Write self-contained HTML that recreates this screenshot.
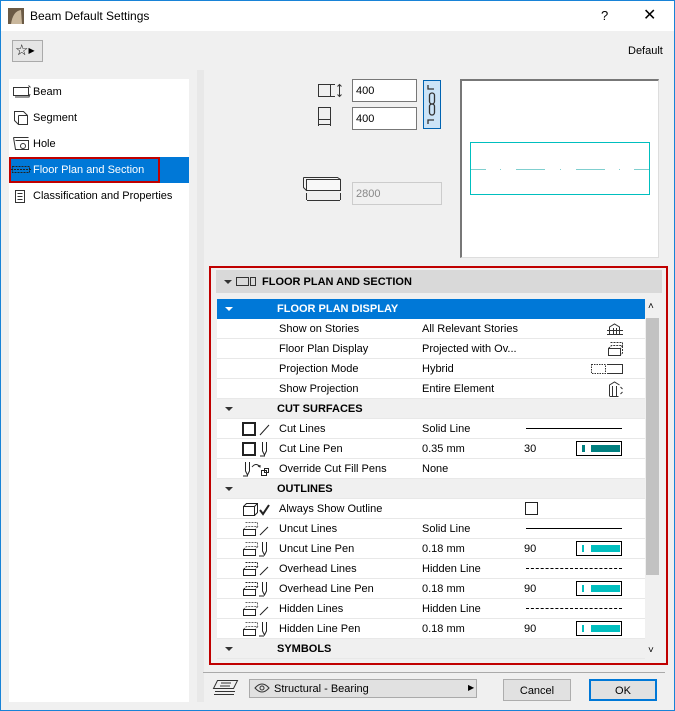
<!DOCTYPE html>
<html><head><meta charset="utf-8"><style>
*{box-sizing:border-box;margin:0;padding:0}
body{width:675px;height:711px;background:#f0f0f0;font-family:"Liberation Sans",sans-serif;font-size:11px;color:#000;position:relative;overflow:hidden}
.a{position:absolute}
.win{left:0;top:0;width:675px;height:711px;border:1px solid #1883d7;border-top:none}
.title{left:0;top:0;width:675px;height:31px;background:#fff;border-top:1px solid #1883d7}
.row{position:absolute;left:217px;width:428px;height:20px;background:#fff;border-bottom:1px solid #e8e8e8}
.row span{position:absolute;top:4px}
.row svg{position:absolute}
.sec{background:#f0f0f0;font-weight:bold}
.tri{position:absolute;left:8px;top:8px;width:0;height:0;border-left:4px solid transparent;border-right:4px solid transparent;border-top:4px solid #333}
.sw{position:absolute;left:359px;top:2px;width:46px;height:15px;border:1px solid #000;background:#fff}
.sw i{position:absolute;top:3px;height:7px;background:#00bfbf}
.line{position:absolute;left:309px;top:9px;width:96px;border-top:1px solid #000}
.dash{position:absolute;left:309px;top:9px;width:96px;border-top:1px dashed #000}
</style></head><body>
<div class="a title"></div>
<svg class="a" style="left:8px;top:8px" width="16" height="16"><rect width="16" height="16" fill="#6b5a45"/><path d="M3 16 Q5 3 13 2 L14 16Z" fill="#c9b79c"/></svg>
<div class="a" style="left:30px;top:9px;font-size:12px">Beam Default Settings</div>
<div class="a" style="left:601px;top:8px;font-size:13px">?</div>
<div class="a" style="left:643px;top:5px;font-size:16px">✕</div>
<div class="a win"></div>
<div class="a" style="left:12px;top:40px;width:31px;height:22px;border:1px solid #aaa;background:#e5e5e5;font-size:15px;padding-left:2px;line-height:20px">☆<span style="font-size:8px;vertical-align:middle">▶</span></div>
<div class="a" style="left:628px;top:45px">Default</div>
<div class="a" style="left:9px;top:79px;width:180px;height:623px;background:#fff"></div>
<div class="a" style="left:197px;top:70px;width:7px;height:632px;background:#e8e8e8"></div>
<svg class="a" style="left:12px;top:84px" width="20" height="14" fill="none" stroke="#333"><path d="M1.5 3.5h15v8h-15z M3 13h14l1-3 M16.5 1.5l2 2"/></svg><div class="a" style="left:33px;top:86px">Beam</div>
<svg class="a" style="left:13px;top:110px" width="16" height="16" fill="none" stroke="#333"><path d="M1.5 1.5h9l4 4v9h-9l-4-4z M5.5 5.5h9 M5.5 5.5v9"/></svg><div class="a" style="left:33px;top:112px">Segment</div>
<svg class="a" style="left:12px;top:136px" width="18" height="16" fill="none" stroke="#333"><path d="M1.5 1.5h15 M1.5 1.5l2 12h13v-9h-13"/><circle cx="11" cy="10" r="2.5"/></svg><div class="a" style="left:33px;top:138px">Hole</div>
<div class="a" style="left:9px;top:157px;width:180px;height:26px;background:#0078d7"></div>
<div class="a" style="left:9px;top:157px;width:151px;height:26px;border:2px solid #c00000"></div>
<svg class="a" style="left:11px;top:165px" width="20" height="10" fill="none" stroke="#222"><path d="M1.5 1.5h17v6h-17z M0 4.5h20" stroke-dasharray="2 1"/></svg>
<div class="a" style="left:33px;top:164px;color:#fff">Floor Plan and Section</div>
<svg class="a" style="left:14px;top:189px" width="12" height="15" fill="none" stroke="#333"><path d="M1.5 1.5h9v12h-9z M3.5 4.5h5 M3.5 7.5h5 M3.5 10.5h5"/></svg><div class="a" style="left:33px;top:190px">Classification and Properties</div>

<svg class="a" style="left:317px;top:83px" width="28" height="46" fill="none" stroke="#333"><path d="M1.5 1.5h12v12h-12z M14 1.5h4 M14 13.5h4 M22.5 1.5v12 M20.5 3.5l2-2 2 2 M20.5 11.5l2 2 2-2"/><path d="M1.5 24.5h12v12h-12z M1.5 37v6 M13.5 37v6 M2 41.5h11"/></svg>
<div class="a" style="left:352px;top:79px;width:65px;height:23px;border:1px solid #777;background:#fff;padding:5px 3px">400</div>
<div class="a" style="left:352px;top:107px;width:65px;height:23px;border:1px solid #777;background:#fff;padding:5px 3px">400</div>
<div class="a" style="left:423px;top:80px;width:18px;height:49px;border:1px solid #0063b1;background:#cce4f7"></div>
<svg class="a" style="left:426px;top:84px" width="12" height="41" fill="none" stroke="#333" stroke-width="1.3"><path d="M2 1v4h6 M2 40v-4h6"/><rect x="3.5" y="9" width="5" height="11" rx="2.5"/><rect x="3.5" y="20" width="5" height="11" rx="2.5"/></svg>
<svg class="a" style="left:302px;top:176px" width="42" height="28" fill="none" stroke="#333"><path d="M4.5 3.5h34v11h-34z M1.5 1.5h34l3 2 M1.5 1.5v10l3 3" fill="#f8f8f8"/><path d="M4.5 17v7 M38.5 17v7 M5 24.5h33"/></svg>
<div class="a" style="left:352px;top:182px;width:90px;height:23px;border:1px solid #ccc;background:#f0f0f0;padding:5px 3px;color:#888">2800</div>
<div class="a" style="left:460px;top:79px;width:199px;height:179px;background:#fff;border:1px solid #ddd;border-top:2px solid #777;border-left:2px solid #777"></div>
<div class="a" style="left:470px;top:142px;width:180px;height:53px;border:1px solid #00bfbf"></div>
<svg class="a" style="left:471px;top:168px" width="178" height="3"><path d="M0 1.5h15 M29 1.5h1 M45 1.5h29 M89 1.5h1 M105 1.5h29 M148 1.5h1 M163 1.5h15" stroke="#7fcfcf"/></svg>

<div class="a" style="left:209px;top:266px;width:459px;height:399px;border:2px solid #c00000"></div>
<div class="a" style="left:216px;top:270px;width:446px;height:23px;background:#d9d9d9;font-weight:bold;padding:6px 0 0 46px">FLOOR PLAN AND SECTION</div>
<div class="a" style="left:224px;top:280px;border-left:4px solid transparent;border-right:4px solid transparent;border-top:4px solid #333"></div>
<div class="a" style="left:236px;top:277px;width:13px;height:9px;border:1px solid #333"></div>
<div class="a" style="left:250px;top:277px;width:6px;height:9px;border:1px solid #333"></div>
<div class="a" style="left:645px;top:299px;width:15px;height:360px;background:#f0f0f0"></div>
<div class="a" style="left:646px;top:318px;width:13px;height:257px;background:#c2c2c2"></div>
<div class="a" style="left:648px;top:301px;font-size:10px">˄</div>
<div class="a" style="left:648px;top:645px;font-size:10px">˅</div>

<div class="row" style="top:299px;background:#0078d7;color:#fff;font-weight:bold;border:none"><i class="tri" style="border-top-color:#fff"></i><span style="left:60px">FLOOR PLAN DISPLAY</span></div>
<div class="row" style="top:319px"><span style="left:62px">Show on Stories</span><span style="left:205px">All Relevant Stories</span><svg style="left:390px;top:3px" width="16" height="15" fill="none" stroke="#333"><path d="M2.5 13V5l5-3 5 3v8 M0 8.5h16 M0 12.5h16 M6.5 6v7 M9.5 6v7"/></svg></div>
<div class="row" style="top:339px"><span style="left:62px">Floor Plan Display</span><span style="left:205px">Projected with Ov...</span><svg style="left:390px;top:2px" width="16" height="16" fill="none" stroke="#333"><path d="M3.5 1.5h12v5 M1.5 7.5h12v7h-12z M1.5 7.5l3-3h11l-2 3 M15.5 5v7l-2 2" stroke-dasharray="2 1"/><path d="M1.5 7.5h12v7h-12z"/></svg></div>
<div class="row" style="top:359px"><span style="left:62px">Projection Mode</span><span style="left:205px">Hybrid</span><svg style="left:373px;top:4px" width="34" height="12" fill="none" stroke="#333"><path d="M1.5 1.5h14v9h-14z" stroke-dasharray="1.5 1"/><path d="M17 1.5h15.5v9H17"/></svg></div>
<div class="row" style="top:379px"><span style="left:62px">Show Projection</span><span style="left:205px">Entire Element</span><svg style="left:391px;top:2px" width="16" height="16" fill="none" stroke="#333"><path d="M1.5 15V4l5-3 5 3 M1.5 15.5h9 M4.5 5v10 M8.5 5v10 M12.5 6l2 2 M12.5 13l2-2"/></svg></div>
<div class="row sec" style="top:399px"><i class="tri"></i><span style="left:60px">CUT SURFACES</span></div>
<div class="row" style="top:419px"><svg style="left:25px;top:3px" width="30" height="14" fill="none" stroke="#222"><rect x="1" y="1" width="12" height="12" stroke-width="2"/><path d="M18 13l9-10"/></svg><span style="left:62px">Cut Lines</span><span style="left:205px">Solid Line</span><i class="line"></i></div>
<div class="row" style="top:439px"><svg style="left:25px;top:2px" width="30" height="16" fill="none" stroke="#222"><rect x="1" y="2" width="12" height="12" stroke-width="2"/><path d="M20.5 1v9l2 4 2-4V1 M18 15h5"/></svg><span style="left:62px">Cut Line Pen</span><span style="left:205px">0.35 mm</span><span style="left:307px">30</span><div class="sw"><i style="left:5px;width:3px;background:#008080"></i><i style="left:14px;width:29px;background:#008080"></i></div></div>
<div class="row" style="top:459px"><svg style="left:25px;top:2px" width="30" height="16" fill="none" stroke="#222"><path d="M3.5 1v9l2 4 2-4V1 M1 15h5 M10 6q4-5 8 0 M16 5l2 1 0-2"/><rect x="19.5" y="9.5" width="5" height="5"/><rect x="22.5" y="7.5" width="4" height="4"/></svg><span style="left:62px">Override Cut Fill Pens</span><span style="left:205px">None</span></div>
<div class="row sec" style="top:479px"><i class="tri"></i><span style="left:60px">OUTLINES</span></div>
<div class="row" style="top:499px"><svg style="left:25px;top:2px" width="32" height="16" fill="none" stroke="#222"><path d="M1.5 5.5h11v9h-11z M1.5 5.5l3-3h11v9l-3 3 M12.5 5.5l3-3"/><path d="M18 9l3 4 6-9" stroke-width="2"/></svg><span style="left:62px">Always Show Outline</span><i style="position:absolute;left:308px;top:3px;width:13px;height:13px;border:1px solid #222"></i></div>
<div class="row" style="top:519px"><svg style="left:25px;top:2px" width="32" height="16" fill="none" stroke="#666"><path d="M3.5 1.5h12v6 M1.5 8.5h12v6h-12z M1.5 8.5l3-3h11l-2 3" stroke-dasharray="2 1"/><path d="M1.5 8.5h12v6h-12z M18 14l8-8" stroke="#222"/></svg><span style="left:62px">Uncut Lines</span><span style="left:205px">Solid Line</span><i class="line"></i></div>
<div class="row" style="top:539px"><svg style="left:25px;top:2px" width="32" height="16" fill="none" stroke="#666"><path d="M3.5 1.5h12v6 M1.5 8.5l3-3h11l-2 3" stroke-dasharray="2 1"/><path d="M1.5 8.5h12v6h-12z M20.5 1v9l2 4 2-4V1 M17 15h5" stroke="#222"/></svg><span style="left:62px">Uncut Line Pen</span><span style="left:205px">0.18 mm</span><span style="left:307px">90</span><div class="sw"><i style="left:5px;width:2px"></i><i style="left:14px;width:29px"></i></div></div>
<div class="row" style="top:559px"><svg style="left:25px;top:2px" width="32" height="16" fill="none" stroke="#222"><path d="M3.5 1.5h12v6 M1.5 8.5l3-3h11l-2 3" stroke-dasharray="2 1"/><path d="M1.5 8.5h12v6h-12z M18 14l8-8"/></svg><span style="left:62px">Overhead Lines</span><span style="left:205px">Hidden Line</span><i class="dash"></i></div>
<div class="row" style="top:579px"><svg style="left:25px;top:2px" width="32" height="16" fill="none" stroke="#222"><path d="M3.5 1.5h12v6 M1.5 8.5l3-3h11l-2 3" stroke-dasharray="2 1"/><path d="M1.5 8.5h12v6h-12z M20.5 1v9l2 4 2-4V1 M17 15h5"/></svg><span style="left:62px">Overhead Line Pen</span><span style="left:205px">0.18 mm</span><span style="left:307px">90</span><div class="sw"><i style="left:5px;width:2px"></i><i style="left:14px;width:29px"></i></div></div>
<div class="row" style="top:599px"><svg style="left:25px;top:2px" width="32" height="16" fill="none" stroke="#666"><path d="M3.5 1.5h12v6 M1.5 8.5l3-3h11l-2 3" stroke-dasharray="2 1"/><path d="M1.5 8.5h12v6h-12z M18 14l8-8" stroke="#222"/></svg><span style="left:62px">Hidden Lines</span><span style="left:205px">Hidden Line</span><i class="dash"></i></div>
<div class="row" style="top:619px"><svg style="left:25px;top:2px" width="32" height="16" fill="none" stroke="#666"><path d="M3.5 1.5h12v6 M1.5 8.5l3-3h11l-2 3" stroke-dasharray="2 1"/><path d="M1.5 8.5h12v6h-12z M20.5 1v9l2 4 2-4V1 M17 15h5" stroke="#222"/></svg><span style="left:62px">Hidden Line Pen</span><span style="left:205px">0.18 mm</span><span style="left:307px">90</span><div class="sw"><i style="left:5px;width:2px"></i><i style="left:14px;width:29px"></i></div></div>
<div class="row sec" style="top:639px"><i class="tri"></i><span style="left:60px">SYMBOLS</span></div>

<div class="a" style="left:203px;top:672px;width:462px;border-top:1px solid #aaa"></div>
<svg class="a" style="left:212px;top:679px" width="28" height="18" fill="none" stroke="#333"><path d="M5.5 1.5h20l-4 8h-20z M3 12.5h20 M2 15.5h20 M9 4h10 M8 7h10"/></svg>
<div class="a" style="left:249px;top:679px;width:228px;height:19px;border:1px solid #aaa;background:#e1e1e1;padding:3px 0 0 24px">Structural - Bearing</div>
<svg class="a" style="left:254px;top:683px" width="16" height="10" fill="none" stroke="#333"><path d="M1 5q7-8 14 0q-7 8-14 0z"/><circle cx="8" cy="5" r="2"/></svg>
<div class="a" style="left:468px;top:683px;font-size:8px">▶</div>
<div class="a" style="left:503px;top:679px;width:68px;height:22px;border:1px solid #adadad;background:#e1e1e1;text-align:center;padding-top:5px">Cancel</div>
<div class="a" style="left:589px;top:679px;width:68px;height:22px;border:2px solid #0078d7;background:#e1e1e1;text-align:center;padding-top:4px">OK</div>
</body></html>
